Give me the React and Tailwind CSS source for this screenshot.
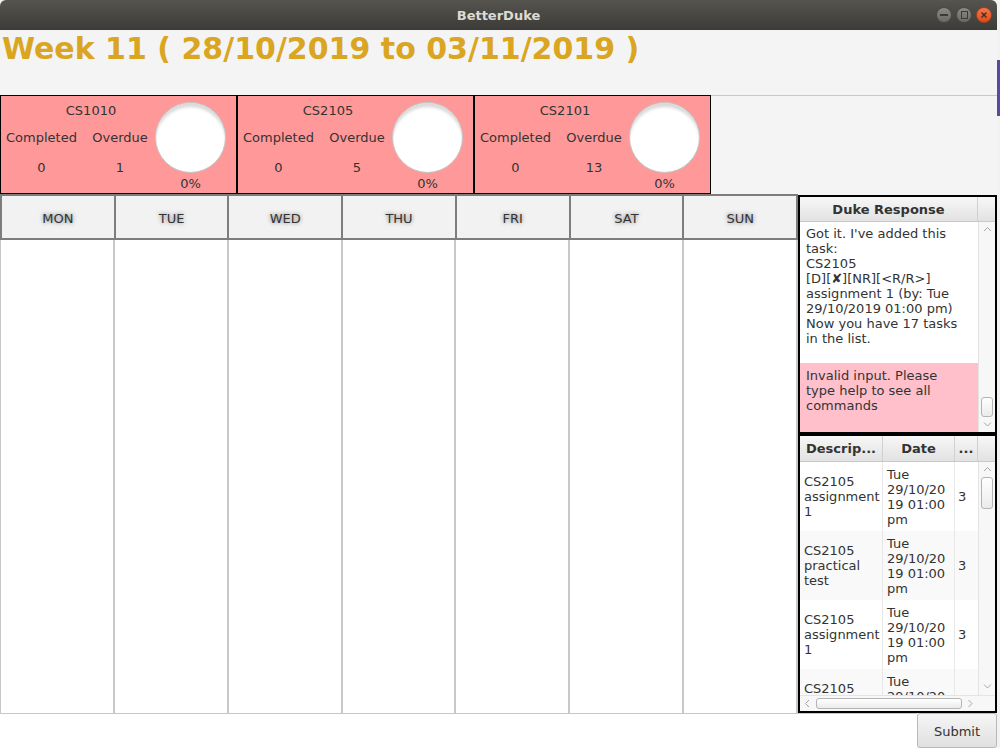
import React from 'react';

const DAYS = ['MON', 'TUE', 'WED', 'THU', 'FRI', 'SAT', 'SUN'];

const MODULES = [
  { code: 'CS1010', completed: 0, overdue: 1 },
  { code: 'CS2105', completed: 0, overdue: 5 },
  { code: 'CS2101', completed: 0, overdue: 13 },
];

const TASKS = [
  { desc: ['CS2105', 'assignment', '1'], num: 3 },
  { desc: ['CS2105', 'practical', 'test'], num: 3 },
  { desc: ['CS2105', 'assignment', '1'], num: 3 },
  { desc: ['CS2105', 'assignment', '2'], num: 3 },
];

const DATE_LINES = ['Tue', '29/10/20', '19 01:00', 'pm'];

function Chevron({ dir }) {
  const paths = {
    up: 'M1 5 L4.5 1.5 L8 5',
    down: 'M1 1.5 L4.5 5 L8 1.5',
    left: 'M5 1 L1.5 4.5 L5 8',
    right: 'M1.5 1 L5 4.5 L1.5 8',
  };
  const horiz = dir === 'left' || dir === 'right';
  return (
    <svg width={horiz ? 7 : 9} height={horiz ? 9 : 7} viewBox={horiz ? '0 0 7 9' : '0 0 9 7'} className="shrink-0">
      <path d={paths[dir]} fill="none" stroke="#a6a6a6" strokeWidth="1" />
    </svg>
  );
}

function ModuleCard({ code, completed, overdue }) {
  return (
    <div className="w-[237px] h-[99px] shrink-0 border border-black bg-[#ff9999] flex">
      <div className="w-[157px] shrink-0 flex flex-col pt-[7px]">
        <div className="w-[180px] text-center">{code}</div>
        <div className="flex mt-[12px]">
          <div className="w-[81px] text-center">Completed</div>
          <div className="w-[76px] text-center">Overdue</div>
        </div>
        <div className="flex mt-[15px]">
          <div className="w-[81px] text-center">{completed}</div>
          <div className="w-[76px] text-center">{overdue}</div>
        </div>
      </div>
      <div className="-ml-[3px] flex flex-col items-center pt-[6px]">
        <div className="w-[71px] h-[71px] rounded-full bg-white border border-[#c4c4c4] shadow-[inset_0_5px_3px_-1px_#dadada]" />
        <div className="mt-[3px]">0%</div>
      </div>
    </div>
  );
}

function TitleBar() {
  return (
    <div className="h-[30px] shrink-0 relative flex items-center justify-center rounded-t-[6px] bg-linear-to-b from-[#56544f] to-[#3c3b37]">
      <span className="text-[13px] font-bold text-[#dfdbd2]">BetterDuke</span>
      <div className="absolute right-[5px] top-[7px] flex gap-[4px]">
        <div className="w-[16px] h-[16px] rounded-full bg-linear-to-b from-[#8c8a85] to-[#6b6964] border border-[#4a4945] flex items-center justify-center">
          <div className="w-[8px] h-[2px] bg-[#3c3b37]" />
        </div>
        <div className="w-[16px] h-[16px] rounded-full bg-linear-to-b from-[#8c8a85] to-[#6b6964] border border-[#4a4945] flex items-center justify-center">
          <div className="w-[7px] h-[8px] border-[1.5px] border-[#3c3b37]" />
        </div>
        <div className="w-[16px] h-[16px] rounded-full bg-linear-to-b from-[#f2784a] to-[#df4a16] border border-[#a8401a] flex items-center justify-center">
          <svg width="8" height="8" viewBox="0 0 8 8">
            <path d="M1.5 1.5 L6.5 6.5 M6.5 1.5 L1.5 6.5" stroke="#3c2a22" strokeWidth="1.3" />
          </svg>
        </div>
      </div>
    </div>
  );
}

function Calendar() {
  return (
    <div className="w-[798px] shrink-0 flex flex-col">
      <div className="h-[46px] flex border-y-2 border-l-2 border-[#7d7d7d] bg-[#f2f2f2]">
        {DAYS.map((d) => (
          <div key={d} className="flex-1 flex items-center justify-center pt-[2px] border-r-2 border-[#7d7d7d] [text-shadow:0_0_4px_rgba(0,0,0,0.55)]">
            {d}
          </div>
        ))}
      </div>
      <div className="flex-1 flex bg-white border-l border-[#c8c8c8]">
        {DAYS.map((d) => (
          <div key={d} className="flex-1 border-r-2 border-[#c8c8c8]" />
        ))}
      </div>
    </div>
  );
}

function DukeResponse() {
  return (
    <div className="h-[239px] shrink-0 border-2 border-black bg-white flex flex-col">
      <div className="h-[25px] shrink-0 flex bg-linear-to-b from-[#f7f7f7] to-[#e2e2e2] border-b border-[#c8c8c8]">
        <div className="w-[178px] flex items-center justify-center pt-[1px] font-bold border-r border-[#d0d0d0]">Duke Response</div>
        <div className="w-[17px]" />
      </div>
      <div className="flex-1 flex min-h-0">
        <div className="w-[178px] flex flex-col">
          <div className="h-[141px] px-[6px] pt-[4px] bg-white">
            <div>Got it. I've added this</div>
            <div>task:</div>
            <div>CS2105</div>
            <div>[D][✘][NR][&lt;R/R&gt;]</div>
            <div>assignment 1 (by: Tue</div>
            <div>29/10/2019 01:00 pm)</div>
            <div>Now you have 17 tasks</div>
            <div>in the list.</div>
          </div>
          <div className="flex-1 px-[6px] pt-[5px] bg-[#ffc0cb]">
            <div>Invalid input. Please</div>
            <div>type help to see all</div>
            <div>commands</div>
          </div>
        </div>
        <div className="w-[17px] flex flex-col items-center bg-[#f7f7f7] border-l border-[#e4e4e4] pt-[4px] pb-[4px]">
          <Chevron dir="up" />
          <div className="flex-1" />
          <div className="w-[12px] h-[20px] rounded-[3px] border border-[#b4b4b4] bg-linear-to-b from-white to-[#ebebeb]" />
          <div className="mt-[4px]">
            <Chevron dir="down" />
          </div>
        </div>
      </div>
    </div>
  );
}

function TaskTable() {
  return (
    <div className="h-[279px] shrink-0 border-2 border-black bg-white flex flex-col">
      <div className="h-[26px] shrink-0 flex font-bold bg-linear-to-b from-[#f7f7f7] to-[#e2e2e2] border-b border-[#c8c8c8]">
        <div className="w-[83px] flex items-center justify-center border-r border-[#d0d0d0]">Descrip...</div>
        <div className="w-[72px] flex items-center justify-center border-r border-[#d0d0d0]">Date</div>
        <div className="w-[23px] flex items-center justify-center border-r border-[#d0d0d0]">...</div>
        <div className="w-[17px]" />
      </div>
      <div className="h-[233px] shrink-0 flex">
        <div className="w-[178px] overflow-hidden">
          {TASKS.map((t, i) => (
            <div key={i} className={`h-[69px] shrink-0 flex ${i % 2 ? 'bg-[#f9f9f9]' : 'bg-white'}`}>
              <div className="w-[83px] shrink-0 flex flex-col justify-center pl-[4px] border-r border-[#e8e8e8] whitespace-nowrap">
                {t.desc.map((line, j) => (
                  <div key={j}>{line}</div>
                ))}
              </div>
              <div className="w-[72px] shrink-0 flex flex-col justify-center pl-[4px] border-r border-[#e8e8e8] whitespace-nowrap">
                {DATE_LINES.map((line, j) => (
                  <div key={j}>{line}</div>
                ))}
              </div>
              <div className="w-[23px] shrink-0 flex items-center pl-[3px]">{t.num}</div>
            </div>
          ))}
        </div>
        <div className="w-[17px] flex flex-col items-center bg-[#f7f7f7] border-l border-[#e4e4e4] pt-[4px] pb-[5px]">
          <Chevron dir="up" />
          <div className="mt-[4px] w-[12px] h-[32px] rounded-[3px] border border-[#b4b4b4] bg-linear-to-b from-white to-[#ebebeb]" />
          <div className="flex-1" />
          <Chevron dir="down" />
        </div>
      </div>
      <div className="h-[16px] shrink-0 flex bg-[#f7f7f7] border-t border-[#e4e4e4]">
        <div className="w-[178px] flex items-center pl-[4px] pr-[4px]">
          <Chevron dir="left" />
          <div className="ml-[5px] w-[146px] h-[11px] rounded-[3px] border border-[#b4b4b4] bg-linear-to-b from-white to-[#ebebeb]" />
          <div className="flex-1" />
          <Chevron dir="right" />
        </div>
        <div className="w-[17px]" />
      </div>
    </div>
  );
}

export default function App() {
  return (
    <div className="w-[1000px] h-[748px] flex bg-[#f2f2f2] overflow-hidden font-['DejaVu_Sans',sans-serif] text-[13px] leading-[15px] text-[#333]">
      <div className="w-[997px] shrink-0 flex flex-col">
        <TitleBar />
        <div className="h-[65px] shrink-0 bg-[#f4f4f4] pl-[2px] pt-[1px] text-[30px] leading-[35px] font-bold text-[#daa520]">
          Week 11 ( 28/10/2019 to 03/11/2019 )
        </div>
        <div className="h-[99px] shrink-0 flex bg-[#f4f4f4]">
          {MODULES.map((m) => (
            <ModuleCard key={m.code} {...m} />
          ))}
          <div className="flex-1 border-t border-[#c8c8c8]" />
        </div>
        <div className="h-[519px] shrink-0 flex bg-[#f4f4f4]">
          <Calendar />
          <div className="w-[199px] shrink-0 flex flex-col pt-[1px]">
            <DukeResponse />
            <TaskTable />
          </div>
        </div>
        <div className="h-[35px] shrink-0 flex">
          <div className="w-[917px] shrink-0 bg-white border-t border-[#c8c8c8]" />
          <div className="w-[80px] shrink-0 flex items-center justify-center pt-[1px] rounded-[3px] border border-[#b9b9b9] bg-linear-to-b from-[#f6f6f6] to-[#e0e0e0]">
            Submit
          </div>
        </div>
      </div>
      <div className="w-[3px] shrink-0 flex flex-col">
        <div className="h-[60px] bg-[#f2f2f2]" />
        <div className="h-[56px] bg-[#5a4aa6]" />
        <div className="flex-1 bg-[#f2f2f2]" />
      </div>
    </div>
  );
}
